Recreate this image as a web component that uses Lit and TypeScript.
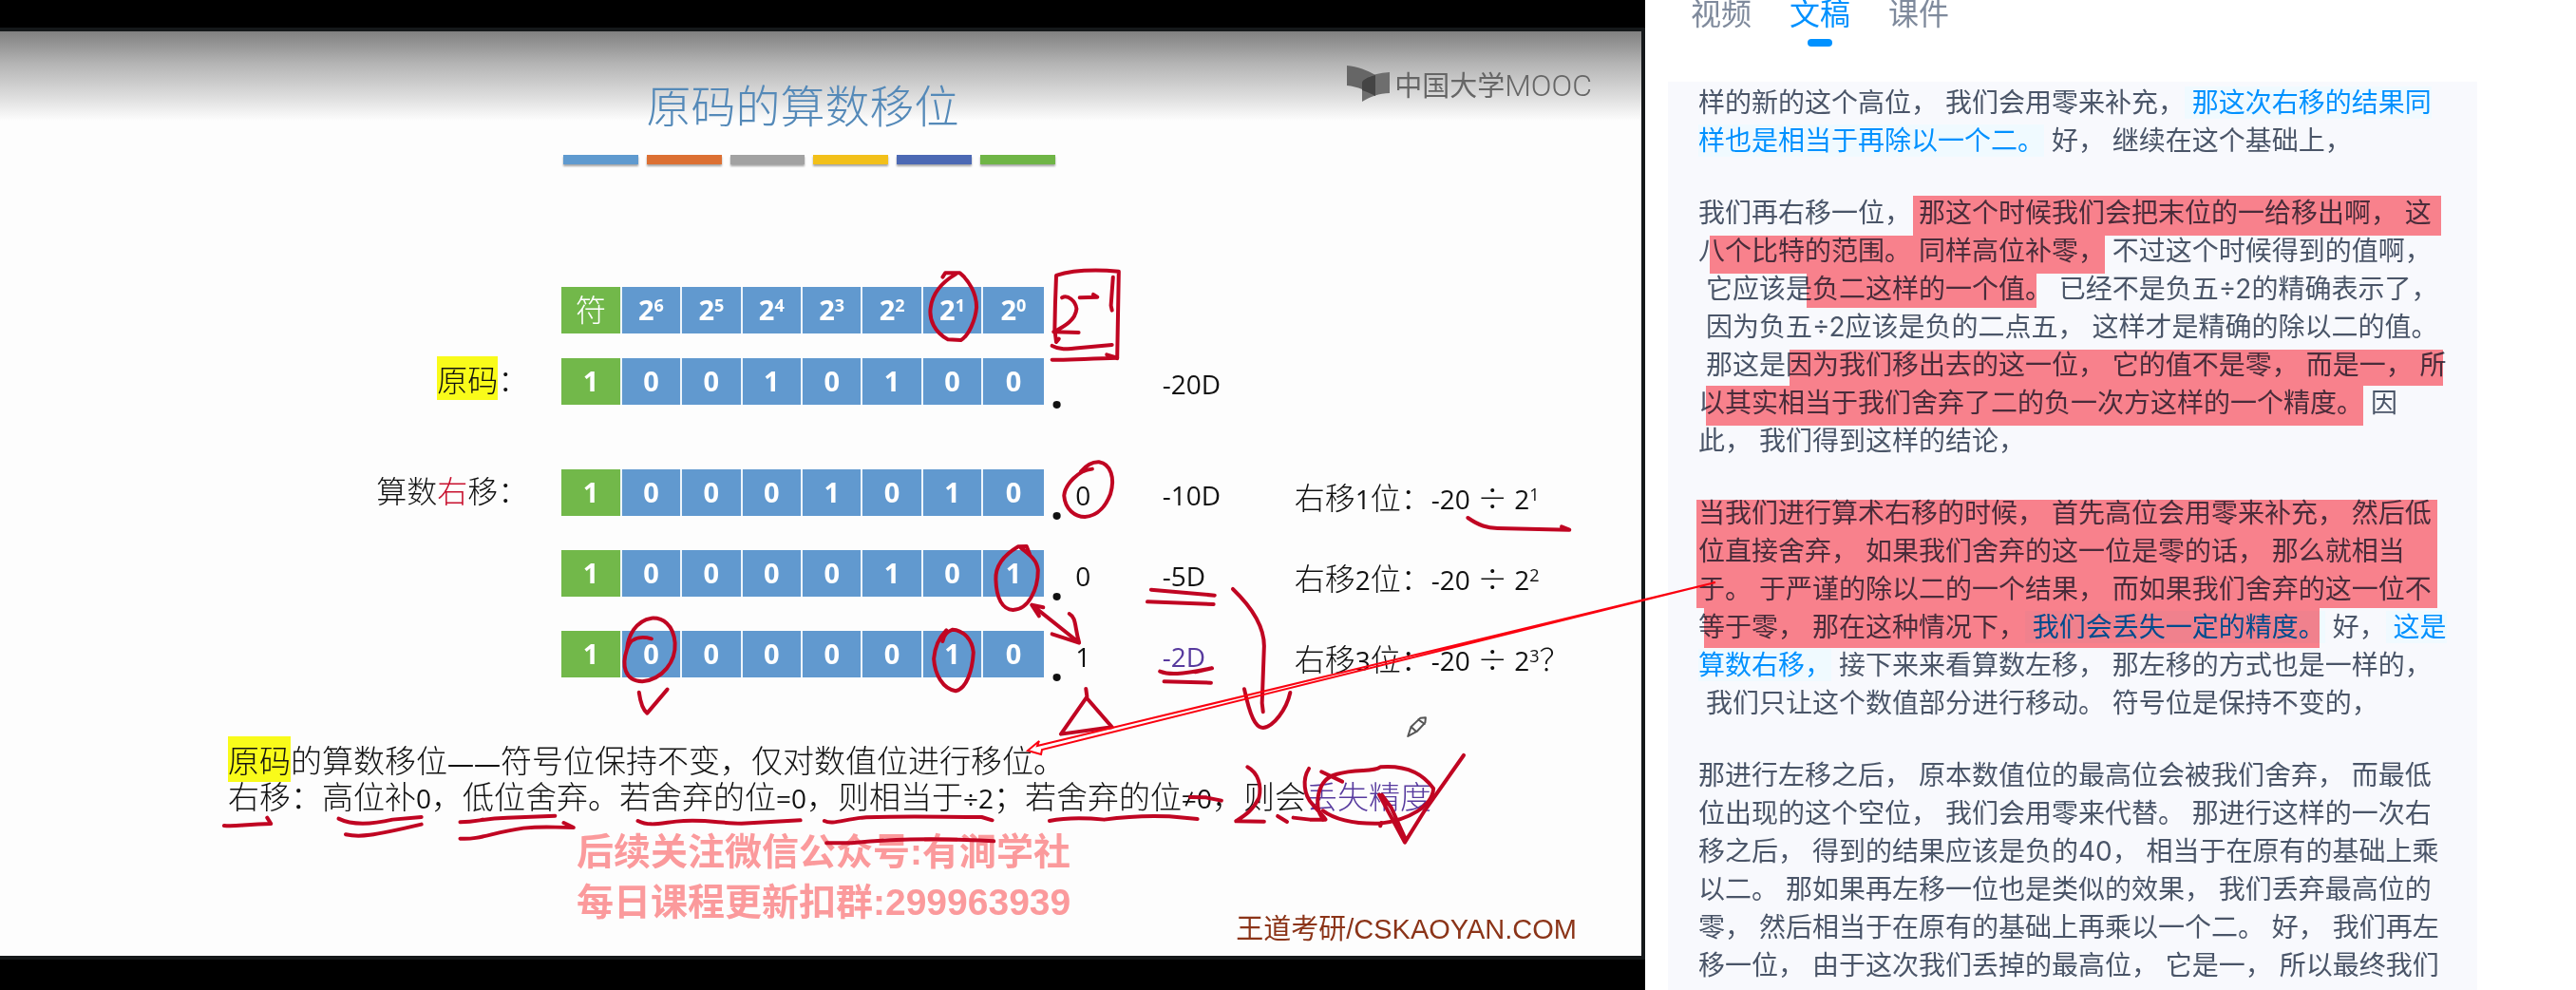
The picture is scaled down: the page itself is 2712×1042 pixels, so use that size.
import { LitElement, html, css, svg } from "lit";
import { customElement, property, state } from "lit/decorators.js";

type Row = {
  label?: unknown;
  bits: unknown[];
  rest?: string;
  value?: string;
  purple?: boolean;
  formula?: unknown;
  gap: string;
};

/** Sets Latin runs in the Latin face beside the Chinese text. */
const mix = (text: string) =>
  text
    .split(/([\x21-\x7e÷≠—][\x20-\x7e÷≠—]*)/)
    .map((part, i) => (i % 2 ? html`<span class="latin">${part}</span>` : part));

const power = (n: string) => html`2<sup>${n}</sup>`;

/** "Shift right by n places: -20 ÷ 2ⁿ", with the division sign kept full width. */
const shift = (n: string, tail = "") =>
  html`${mix(`右移${n}位：-20 `)}÷${mix(" 2")}<sup>${n}</sup>${tail}`;

const ROWS: Row[] = [
  { bits: ["符", ...["6", "5", "4", "3", "2", "1", "0"].map(power)], gap: "first" },
  { label: html`<mark>原码</mark>：`, bits: [..."10010100"], rest: "", value: "-20D", gap: "small" },
  {
    label: html`算数<em>右</em>移：`,
    bits: [..."10001010"],
    rest: "0",
    value: "-10D",
    formula: shift("1"),
    gap: "large",
  },
  { bits: [..."10000101"], rest: "0", value: "-5D", formula: shift("2"), gap: "medium" },
  { bits: [..."10000010"], rest: "1", value: "-2D", purple: true, formula: shift("3", "？"), gap: "medium" },
];

@customElement("lecture-slide")
export class LectureSlide extends LitElement {
  static styles = css`
    :host {
      display: block;
      position: relative;
      background: #000;
      padding: 29px 0 31px;
      font-family: "Noto Sans CJK SC", sans-serif;
      font-weight: 300;
      color: #111;
    }
    .slide {
      display: flex;
      flex-direction: column;
      border: 4px solid #15181a;
      border-left: 0;
      background: linear-gradient(#808080, #b4b4b4 34px, #dcdcdc 68px, #fdfdfd 94px);
      white-space: nowrap;
    }
    .head {
      display: grid;
      grid-template-columns: 591fr 507fr 629fr;
      padding-top: 36px;
    }
    h1 {
      grid-column: 2;
      margin: 0;
      font-size: 47px;
      line-height: 80px;
      font-weight: 300;
      color: #5489b8;
      text-align: center;
    }
    .brand {
      display: flex;
      align-items: center;
      justify-content: flex-end;
      gap: 4px;
      height: 38px;
      padding-right: 52px;
      font-size: 29px;
      font-weight: 400;
      color: #666;
    }
    .brand b {
      font-family: Roboto, sans-serif;
      font-weight: 300;
      font-size: 32px;
    }
    .brand svg {
      width: 46px;
      height: 38px;
    }
    .stripes {
      grid-column: 2;
      display: grid;
      grid-template-columns: repeat(6, 1fr);
      gap: 9px;
      margin: 14px -12px 0 2px;
    }
    .stripes i {
      height: 10px;
      box-shadow: 0 2px 2px rgba(0, 0, 0, 0.35);
    }
    .s0 { background: #5f9acf; }
    .s1 { background: #dc7033; }
    .s2 { background: #a2a2a2; }
    .s3 { background: #f2c01a; }
    .s4 { background: #4c69b4; }
    .s5 { background: #6fb546; }

    table,
    tbody {
      display: block;
    }
    tr {
      display: grid;
      grid-template-columns: 4728fr repeat(8, 507fr) 1000fr 1112fr 2920fr;
      grid-template-rows: 49px;
    }
    .first { margin-top: 129px; }
    .small { margin-top: 26px; }
    .medium { margin-top: 36px; }
    .large { margin-top: 68px; }
    th,
    td {
      display: block;
      min-width: 0;
      padding: 0;
      line-height: 49px;
      font-size: 32px;
      font-weight: 300;
    }
    .name {
      text-align: right;
      padding-right: 35px;
      line-height: 43px;
    }
    em {
      font-style: normal;
      color: #c8102e;
    }
    mark {
      background: #f9fb1a;
      color: inherit;
      line-height: 1;
    }
    .bit {
      border-right: 2px solid #eef5fb;
      background: #6199cf;
      color: #fff;
      text-align: center;
      font: bold 29px/47px "Open Sans", sans-serif;
    }
    .sign {
      background: #72b84a;
      font-family: "Open Sans", "Noto Sans CJK SC", sans-serif;
    }
    .symbol {
      font-size: 32px;
      font-weight: 300;
    }
    .last {
      border-right: 0;
    }
    .rest {
      display: flex;
      gap: 13px;
      padding-left: 7px;
    }
    .point {
      font: bold 48px/69px "Open Sans", sans-serif;
    }
    .latin,
    .rest span,
    .value,
    .formula sup {
      font-family: "Open Sans", "Noto Sans CJK SC", sans-serif;
      font-weight: 400;
      font-size: 28px;
    }
    .latin {
      line-height: 0;
    }
    .rest .point {
      font-size: 48px;
      font-weight: 700;
    }
    .rest .digit,
    .value {
      line-height: 55px;
    }
    .formula {
      line-height: 57px;
    }
    sup,
    .formula sup {
      font-size: 18px;
      line-height: 0;
      vertical-align: 9px;
    }
    .purple {
      color: #573a9e;
    }
    .notes {
      margin: 67px 0 0 240px;
      font-size: 33px;
      line-height: 38px;
    }
    .notes p {
      margin: 0;
    }
    .foot {
      display: flex;
      justify-content: space-between;
      align-items: flex-end;
      height: 126px;
      margin: 14px 0 10px;
      padding: 0 68px 0 607px;
    }
    .contact {
      align-self: flex-start;
      font-family: "Liberation Sans", "Noto Sans CJK SC", sans-serif;
      font-size: 39px;
      line-height: 53px;
      font-weight: 700;
      color: #fb9a9c;
    }
    .school {
      font: 29px/36px "Liberation Sans", "Noto Sans CJK SC", sans-serif;
      color: #8b3418;
    }
    .ink {
      position: absolute;
      inset: 0;
      width: 100%;
      height: 100%;
      fill: none;
      stroke: #c00522;
      stroke-width: 4;
      stroke-linecap: round;
      stroke-linejoin: round;
      pointer-events: none;
    }
    .ink path {
      vector-effect: non-scaling-stroke;
    }
    .ink .pencil {
      stroke: #555;
      stroke-width: 2;
    }
  `;

  private row(r: Row) {
    return html`<tr class=${r.gap}>
      <th class="name" scope="row">${r.label}</th>
      ${r.bits.map(
        (b, i) =>
          html`<td class="bit ${i === 0 ? "sign" : ""} ${b === "符" ? "symbol" : ""} ${i === 7 ? "last" : ""}">${b}</td>`
      )}
      <td class="rest">
        ${r.rest === undefined ? "" : html`<span class="point">.</span><span class="digit">${r.rest}</span>`}
      </td>
      <td class="value ${r.purple ? "purple" : ""}">${r.value}</td>
      <td class="formula">${r.formula}</td>
    </tr>`;
  }

  private ink() {
    return svg`
      <g transform="translate(880 0) scale(0.5485 0.3333)">
        <path d="M205 875 L210 862 L238 862 C255 885 270 925 270 970 C268 1010 255 1060 240 1074 L215 1072 C190 1050 178 1010 182 970 C186 925 205 890 230 866"/>
        <path d="M434 940 C445 930 460 950 462 975 C460 1010 440 1030 418 1048 L466 1050"/>
        <path d="M468 940 L502 938 L494 930 M532 875 L528 965 L530 980"/>
        <path d="M428 1070 L423 1080 L420 1040 L421 960 L423 870 C450 855 490 850 543 857 L540 1132"/>
        <path d="M415 1092 C430 1105 440 1104 470 1098 L530 1089 M415 1136 C450 1138 480 1132 540 1130 L520 1120"/>
        <path d="M492 1481 C465 1485 440 1530 438 1565 C440 1610 460 1632 478 1632 C505 1630 520 1590 527 1560 C536 1510 528 1465 505 1459 C490 1458 480 1470 470 1490"/>
      </g>
      <g transform="translate(880 520) scale(0.5485 0.3333)">
        <path d="M1213 75 C1235 100 1250 107 1270 108 L1408 113 L1393 103"/>
        <path d="M372 190 L366 165 L350 166 C320 195 306 230 307 270 C308 330 320 365 340 366 C370 365 388 300 388 240 C386 210 375 195 355 170"/>
        <path d="M376 350 L466 468 M390 385 L376 350 L398 358 M448 378 C462 390 458 420 467 470 L415 442"/>
        <path d="M205 465 C208 440 215 435 224 428 C245 430 262 460 264 500 C262 560 250 615 230 622 C205 615 190 570 188 520 C190 480 200 450 212 430"/>
        <path d="M605 302 L727 320 M598 340 L725 348 M622 560 C640 572 660 570 722 550 L690 562 M630 592 L720 596"/>
        <path d="M762 300 C800 360 822 420 822 480 L818 660 L820 688"/>
        <path d="M784 616 C795 700 805 738 820 738 C840 735 865 680 872 627"/>
        <path d="M480 615 L482 640 L432 758 L530 736 L482 645"/>
        <path d="M932 877 L972 908 M935 1028 C915 980 925 900 960 885 C1000 865 1030 880 1045 862 C1100 855 1130 890 1147 930 C1145 985 1100 1030 1045 1040 C1000 1042 960 1030 935 1000"/>
        <path d="M790 862 C810 880 818 920 812 960 C800 1000 785 1015 768 1033 L822 1034 M848 1017 L866 1035"/>
        <path d="M908 867 C895 900 898 950 915 980 C925 1000 935 1015 940 1028 L910 1028 L878 1022"/>
        <path d="M1043 950 L1092 1100 L1130 1000 L1205 825 M1048 950 L1066 990 L1092 1085 M1045 1048 L1047 1038"/>
        <path d="M680 957 L710 958 L740 968"/>
        <path d="M410 1032 C440 1022 480 1022 515 1028 C550 1020 600 1015 640 1018 L694 1026"/>
        <path d="M-22 1032 C-8 1044 10 1030 50 1022 C110 1016 200 1020 280 1020 L300 1030"/>
        <path d="M-18 1102 L30 1102 C100 1090 200 1086 303 1096"/>
        <path class="pencil" d="M1098 765 L1104 735 L1122 707 L1132 706 L1131 722 L1115 750 Z M1104 735 L1114 750 M1118 712 L1130 726"/>
      </g>
      <g transform="translate(0 520) scale(0.574 0.3333)">
        <path d="M1195 457 C1170 445 1155 460 1150 490 C1140 540 1145 590 1178 592 C1215 585 1240 530 1238 470 C1235 410 1215 390 1195 392 C1165 400 1152 450 1150 490"/>
        <path d="M1172 626 C1174 650 1178 680 1187 692 L1224 617"/>
        <path d="M411 1047 C430 1052 450 1042 497 1041 L490 1022"/>
        <path d="M621 1025 C650 1050 690 1040 720 1028 L773 1020 M634 1075 C660 1085 680 1080 773 1043"/>
        <path d="M844 1036 C880 1035 880 1025 930 1022 L1018 1016 M844 1088 C880 1092 900 1070 960 1055 C1000 1048 1010 1053 1052 1053 L1034 1038"/>
        <path d="M1170 1032 C1190 1050 1210 1040 1240 1034 C1290 1025 1320 1040 1360 1040 L1468 1030"/>
      </g>`;
  }

  render() {
    return html`
      <section class="slide">
        <header class="head">
          <h1>原码的算数移位</h1>
          <div class="brand">
            <svg viewBox="0 0 46 38" aria-hidden="true">
              <path d="M0 0 C11 1 22 5 30 10 V32 C22 27 11 22 0 21Z" fill="#666" />
              <path d="M45 7 C32 8 16 12 16 18 V38 C24 33 34 29 45 29Z" fill="#6e6e6e" />
              <path d="M30 10 C22 12 16 15 16 18 V26 C22 28 26 30 30 32Z" fill="#444" />
            </svg>
            <span>中国大学<b>MOOC</b></span>
          </div>
          <div class="stripes">${[0, 1, 2, 3, 4, 5].map((i) => html`<i class="s${i}"></i>`)}</div>
        </header>
        <table>
          <tbody>
            ${ROWS.map((r) => this.row(r))}
          </tbody>
        </table>
        <div class="notes">
          <p><mark>原码</mark>${mix("的算数移位——符号位保持不变，仅对数值位进行移位。")}</p>
          <p>
            ${mix("右移：高位补0，低位舍弃。若舍弃的位=0，则相当于÷2；若舍弃的位≠0，则会")}<span class="purple">丢失精度</span>
          </p>
        </div>
        <footer class="foot">
          <div class="contact">后续关注微信公众号:有涧学社<br />每日课程更新扣群:299963939</div>
          <div class="school">王道考研/CSKAOYAN.COM</div>
        </footer>
      </section>
      <svg class="ink" viewBox="0 0 1732 1042" preserveAspectRatio="none" aria-hidden="true">${this.ink()}</svg>
    `;
  }
}

/** Each paragraph is a list of lines; text between square brackets is a key sentence. */
const SCRIPT: string[][] = [
  ["样的新的这个高位， 我们会用零来补充，[ 那这次右移的结果同]", "[样也是相当于再除以一个二。] 好， 继续在这个基础上，"],
  [
    "我们再右移一位， 那这个时候我们会把末位的一给移出啊， 这",
    "八个比特的范围。 同样高位补零， 不过这个时候得到的值啊，",
    " 它应该是负二这样的一个值。 已经不是负五÷2的精确表示了，",
    " 因为负五÷2应该是负的二点五， 这样才是精确的除以二的值。",
    " 那这是因为我们移出去的这一位， 它的值不是零， 而是一， 所",
    "以其实相当于我们舍弃了二的负一次方这样的一个精度。 因",
    "此， 我们得到这样的结论，",
  ],
  [
    "当我们进行算术右移的时候， 首先高位会用零来补充， 然后低",
    "位直接舍弃， 如果我们舍弃的这一位是零的话， 那么就相当",
    "于。 于严谨的除以二的一个结果， 而如果我们舍弃的这一位不",
    "等于零， 那在这种情况下，[ 我们会丢失一定的精度。] 好，[ 这是]",
    "[算数右移，] 接下来来看算数左移， 那左移的方式也是一样的，",
    " 我们只让这个数值部分进行移动。 符号位是保持不变的，",
  ],
  [
    "那进行左移之后， 原本数值位的最高位会被我们舍弃， 而最低",
    "位出现的这个空位， 我们会用零来代替。 那进行这样的一次右",
    "移之后， 得到的结果应该是负的40， 相当于在原有的基础上乘",
    "以二。 那如果再左移一位也是类似的效果， 我们丢弃最高位的",
    "零， 然后相当于在原有的基础上再乘以一个二。 好， 我们再左",
    "移一位， 由于这次我们丢掉的最高位， 它是一， 所以最终我们",
  ],
];

@customElement("lecture-transcript")
export class LectureTranscript extends LitElement {
  @property() active = "文稿";

  static styles = css`
    :host {
      display: block;
      font-family: Inter, "Noto Sans CJK SC", sans-serif;
      color: #4a5568;
      background: #fff;
    }
    nav {
      display: flex;
      gap: 40px;
      padding-left: 48px;
      height: 86px;
    }
    button {
      display: flex;
      flex-direction: column;
      align-items: center;
      gap: 12px;
      align-self: flex-start;
      padding: 0;
      border: 0;
      background: none;
      font: inherit;
      font-size: 32px;
      line-height: 29px;
      color: #7f8a9c;
      cursor: pointer;
    }
    .on {
      color: #0091ff;
    }
    .on::after {
      content: "";
      width: 26px;
      height: 8px;
      border-radius: 4px;
      background: #0091ff;
    }
    article {
      margin: 0 104px 0 24px;
      padding: 2px 32px 6px;
      background: #f8f9fd;
      font-size: 28px;
      line-height: 40px;
      white-space: pre;
    }
    p {
      margin: 0 0 36px;
    }
    p:last-child {
      margin: 0;
    }
    .line {
      display: block;
    }
    .key {
      color: #0091ff;
      background: #f0faff;
    }
  `;

  private line(text: string) {
    const parts = text.split(/[\[\]]/);
    return html`<span class="line">${parts.map((t, i) => (i % 2 ? html`<span class="key">${t}</span>` : t))}</span>`;
  }

  render() {
    return html`
      <nav role="tablist">
        ${["视频", "文稿", "课件"].map(
          (t) => html`<button
            role="tab"
            class=${t === this.active ? "on" : ""}
            aria-selected=${t === this.active}
            @click=${() => (this.active = t)}
          >${t}</button>`
        )}
      </nav>
      <article>${SCRIPT.map((p) => html`<p>${p.map((l) => this.line(l))}</p>`)}</article>
    `;
  }
}

/** Highlighter blocks as x, y, right, bottom. */
const BLOCKS = [
  [2014, 206, 2570, 248],
  [1800, 248, 2216, 288],
  [1902, 288, 2144, 324],
  [1884, 368, 2572, 406],
  [1796, 406, 2488, 448],
  [1786, 526, 2566, 640],
  [1794, 640, 2442, 682],
];

@customElement("app-root")
export class AppRoot extends LitElement {
  @state() private blocks = BLOCKS;

  static styles = css`
    :host {
      display: block;
      position: relative;
      background: #fff;
    }
    main {
      display: grid;
      grid-template-columns: 1732fr 980fr;
    }
    .over {
      position: absolute;
      inset: 0;
      width: 100%;
      height: 100%;
      pointer-events: none;
    }
    .marker {
      fill: #ff848d;
      mix-blend-mode: multiply;
    }
    .pointer {
      fill: none;
      stroke: #fa0010;
      stroke-width: 2;
    }
  `;

  render() {
    return html`
      <main>
        <lecture-slide lang="zh-CN"></lecture-slide>
        <lecture-transcript lang="zh-CN"></lecture-transcript>
      </main>
      <svg class="over marker" viewBox="0 0 2712 1042" preserveAspectRatio="none" aria-hidden="true">
        ${this.blocks.map(([x, y, r, b]) => svg`<rect x=${x} y=${y} width=${r - x} height=${b - y} />`)}
      </svg>
      <svg class="over pointer" viewBox="0 0 2712 1042" preserveAspectRatio="none" aria-hidden="true">
        <path d="M1806 613 L1092 785 L1094 780 L1082 790 L1096 794 L1097 789 Z" />
      </svg>
    `;
  }
}
